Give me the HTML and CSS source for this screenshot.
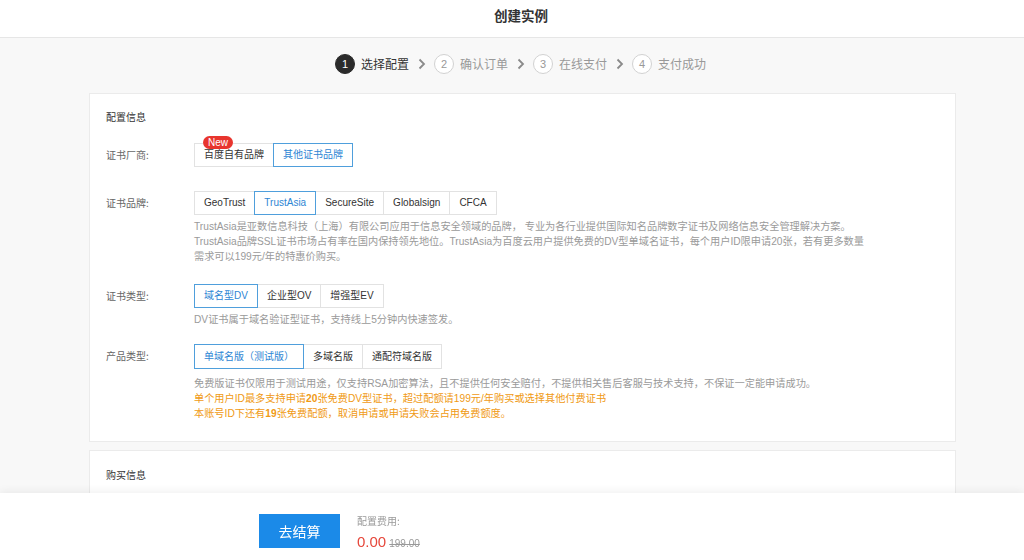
FILE: index.html
```html
<!DOCTYPE html>
<html lang="zh-CN">
<head>
<meta charset="utf-8">
<title>创建实例</title>
<link rel="stylesheet" href="styles.css">
</head>
<body>
<header class="topbar">
  <div class="wrap"><h1 class="page-title">创建实例</h1></div>
</header>

<div class="wrap">
  <ol class="steps">
    <li class="step active"><span class="step-num">1</span><span class="step-text">选择配置</span></li>
    <li class="step-sep"><svg viewBox="0 0 8 12" width="8" height="12"><path d="M1.5 1.5 L6 6 L1.5 10.5" fill="none" stroke="#8a8a8a" stroke-width="1.8"/></svg></li>
    <li class="step"><span class="step-num">2</span><span class="step-text">确认订单</span></li>
    <li class="step-sep"><svg viewBox="0 0 8 12" width="8" height="12"><path d="M1.5 1.5 L6 6 L1.5 10.5" fill="none" stroke="#8a8a8a" stroke-width="1.8"/></svg></li>
    <li class="step"><span class="step-num">3</span><span class="step-text">在线支付</span></li>
    <li class="step-sep"><svg viewBox="0 0 8 12" width="8" height="12"><path d="M1.5 1.5 L6 6 L1.5 10.5" fill="none" stroke="#8a8a8a" stroke-width="1.8"/></svg></li>
    <li class="step"><span class="step-num">4</span><span class="step-text">支付成功</span></li>
  </ol>

  <section class="card config">
    <h2 class="card-title">配置信息</h2>

    <div class="form-row row-vendor">
      <div class="form-label">证书厂商:</div>
      <div class="form-field">
        <div class="btn-group">
          <span class="opt has-badge">百度自有品牌<span class="badge">New</span></span>
          <span class="opt selected">其他证书品牌</span>
        </div>
      </div>
    </div>

    <div class="form-row row-brand">
      <div class="form-label">证书品牌:</div>
      <div class="form-field">
        <div class="btn-group">
          <span class="opt">GeoTrust</span>
          <span class="opt selected">TrustAsia</span>
          <span class="opt">SecureSite</span>
          <span class="opt">Globalsign</span>
          <span class="opt">CFCA</span>
        </div>
        <p class="desc">TrustAsia是亚数信息科技（上海）有限公司应用于信息安全领域的品牌， 专业为各行业提供国际知名品牌数字证书及网络信息安全管理解决方案。<br>TrustAsia品牌SSL证书市场占有率在国内保持领先地位。TrustAsia为百度云用户提供免费的DV型单域名证书，每个用户ID限申请20张，若有更多数量<br>需求可以199元/年的特惠价购买。</p>
      </div>
    </div>

    <div class="form-row row-type">
      <div class="form-label">证书类型:</div>
      <div class="form-field">
        <div class="btn-group">
          <span class="opt selected">域名型DV</span>
          <span class="opt">企业型OV</span>
          <span class="opt">增强型EV</span>
        </div>
        <p class="desc">DV证书属于域名验证型证书，支持线上5分钟内快速签发。</p>
      </div>
    </div>

    <div class="form-row row-product">
      <div class="form-label">产品类型:</div>
      <div class="form-field">
        <div class="btn-group">
          <span class="opt selected">单域名版（测试版）</span>
          <span class="opt">多域名版</span>
          <span class="opt">通配符域名版</span>
        </div>
        <p class="desc notes">免费版证书仅限用于测试用途，仅支持RSA加密算法，且不提供任何安全赔付，不提供相关售后客服与技术支持，不保证一定能申请成功。<br><span class="warn">单个用户ID最多支持申请<b>20</b>张免费DV型证书，超过配额请199元/年购买或选择其他付费证书</span><br><span class="warn">本账号ID下还有<b>19</b>张免费配额，取消申请或申请失败会占用免费额度。</span></p>
      </div>
    </div>
  </section>

  <section class="card purchase">
    <h2 class="card-title">购买信息</h2>
  </section>
</div>

<footer class="bottombar">
  <div class="bottom-inner">
    <button class="pay-btn" type="button">去结算</button>
    <div class="fee">
      <div class="fee-label">配置费用:</div>
      <div class="fee-value"><span class="price">0.00</span><s class="old-price">199.00</s></div>
    </div>
  </div>
</footer>
</body>
</html>
```

FILE: styles.css
```css
* { box-sizing: border-box; }

html, body {
  margin: 0;
  padding: 0;
  height: 560px;
  overflow: hidden;
}

body {
  background: #f8f8f8;
  font-family: "Liberation Sans", "Noto Sans CJK SC", sans-serif;
  color: #333;
  font-size: 10px;
}

.wrap {
  width: 867px;
  margin-left: 89px;
}

.topbar {
  background: #fff;
  height: 38px;
  border-bottom: 1px solid #e6e6e6;
}

.page-title {
  margin: 0;
  text-align: center;
  font-size: 13.5px;
  font-weight: bold;
  line-height: 34px;
  color: #333;
  padding-right: 3px;
}

.steps {
  list-style: none;
  margin: 0;
  padding: 16px 4px 0 0;
  height: 55px;
  display: flex;
  justify-content: center;
  align-items: flex-start;
}

.step {
  display: flex;
  align-items: center;
  height: 20px;
}

.step-num {
  width: 20px;
  height: 20px;
  border-radius: 50%;
  border: 1px solid #d2d2d2;
  color: #999;
  font-size: 11px;
  display: flex;
  align-items: center;
  justify-content: center;
  background: #fff;
}

.step.active .step-num {
  background: #2b2b2b;
  border-color: #2b2b2b;
  color: #fff;
}

.step-text {
  margin-left: 6px;
  font-size: 12px;
  color: #999;
  font-family: "Noto Sans CJK SC", sans-serif;
  line-height: 20px;
}

.step.active .step-text {
  color: #333;
}

.step-sep {
  display: flex;
  align-items: center;
  height: 20px;
  margin: 0 8px 0 9px;
}

.card {
  background: #fff;
  border: 1px solid #ebebeb;
}

.config {
  padding: 16px 16px 17px 16px;
  height: 349px;
}

.card-title {
  margin: 0;
  font-size: 10px;
  font-weight: normal;
  line-height: 14px;
  color: #333;
  font-family: "Noto Sans CJK SC", sans-serif;
}

.form-row {
  display: flex;
  align-items: flex-start;
}

.form-label {
  width: 88px;
  flex: none;
  height: 24px;
  line-height: 24px;
  color: #666;
  font-family: "Noto Sans CJK SC", sans-serif;
}

.form-field {
  flex: 1;
}

.row-vendor { margin-top: 19px; }
.row-brand { margin-top: 24px; }
.row-type { margin-top: 20px; }
.row-product { margin-top: 17px; }

.btn-group {
  display: flex;
}

.opt {
  position: relative;
  display: inline-block;
  height: 24px;
  line-height: 22px;
  padding: 0 9px;
  border: 1px solid #e2e2e2;
  margin-left: -1px;
  background: #fff;
  color: #333;
  white-space: nowrap;
  font-size: 10px;
}

.opt:first-child { margin-left: 0; }

.opt.selected {
  border-color: #4f9fdc;
  color: #2e86d4;
  z-index: 1;
}

.row-product .opt {
  height: 25px;
  line-height: 23px;
}

.badge {
  position: absolute;
  left: 8px;
  top: -8px;
  height: 13px;
  line-height: 13px;
  padding: 0 5px;
  border-radius: 7px;
  background: #e8352e;
  color: #fff;
  font-size: 10px;
  font-family: "Liberation Sans", sans-serif;
}

.desc {
  margin: 4px 0 0 0;
  color: #9a9a9a;
  font-size: 10.2px;
  line-height: 15px;
  white-space: nowrap;
}

.notes {
  margin-top: 7px;
}

.warn {
  color: #f09a14;
}

.warn b {
  font-weight: bold;
}

.purchase {
  margin-top: 8px;
  height: 200px;
  padding: 17px 16px;
}

.bottombar {
  position: fixed;
  left: 0;
  right: 0;
  bottom: 0;
  height: 67px;
  background: #fff;
  box-shadow: 0 -2px 8px rgba(0, 0, 0, 0.06);
}

.bottom-inner {
  display: flex;
  align-items: flex-start;
  padding: 21px 0 0 259px;
}

.pay-btn {
  width: 81px;
  height: 34px;
  border: none;
  border-radius: 0;
  background: #1b8ae8;
  color: #fff;
  font-size: 14px;
  font-family: "Noto Sans CJK SC", sans-serif;
  padding: 0;
  cursor: pointer;
}

.fee {
  margin-left: 17px;
}

.fee-label {
  font-size: 10px;
  color: #999;
  line-height: 14px;
  font-family: "Noto Sans CJK SC", sans-serif;
}

.fee-value {
  margin-top: 5px;
  display: flex;
  align-items: baseline;
}

.price {
  color: #e6473b;
  font-size: 15px;
}

.old-price {
  margin-left: 3px;
  color: #999;
  font-size: 10px;
}
```
